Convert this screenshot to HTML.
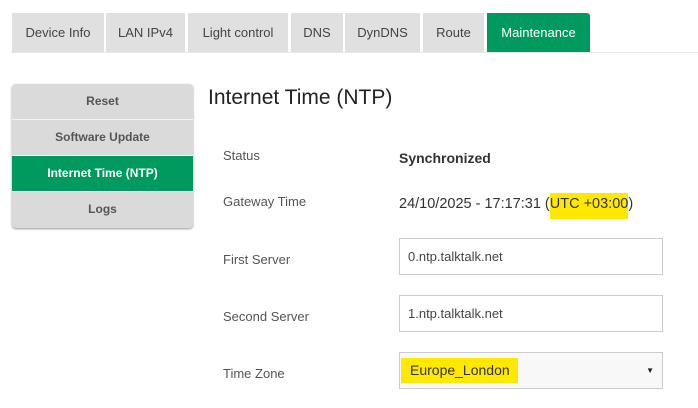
<!DOCTYPE html>
<html><head><style>
*{margin:0;padding:0;box-sizing:border-box}
body{width:698px;height:408px;background:#fff;font-family:"Liberation Sans",sans-serif;position:relative;overflow:hidden;color:#444}
.line{position:absolute;left:11px;right:0;top:52px;height:1px;background:#e8e8e8}
.tab{position:absolute;top:13px;height:39px;background:#e0e0e0;font-size:13px;line-height:39px;text-align:center;color:#444}
.tab.on{background:#009a5e;color:#fff;border-radius:0 3px 0 0}
.side{position:absolute;left:12px;top:84px;width:181px;height:144px;border-radius:4px;background:#dadada;box-shadow:0 1px 2px #999;overflow:hidden}
.si{height:36px;line-height:35px;text-align:center;font-size:12px;font-weight:bold;color:#555;border-bottom:1px solid #f3f3f3}
.si.on{background:#009a5e;color:#fff}
h1{position:absolute;left:208px;top:86px;font-weight:normal;font-size:21px;color:#222}
.lb{position:absolute;left:223px;font-size:13px;color:#555}
.v{position:absolute;left:399px;font-size:14.5px;color:#333}
.in{position:absolute;left:399px;width:264px;height:37px;border:1px solid #ccc;font-size:13px;color:#444;padding-left:8px;line-height:35px;background:#fff}
.hl{background:#ffe800}
</style></head><body>
<div class="tab" style="left:12px;width:92px">Device Info</div>
<div class="tab" style="left:106px;width:79px">LAN IPv4</div>
<div class="tab" style="left:188px;width:100px">Light control</div>
<div class="tab" style="left:291px;width:52px">DNS</div>
<div class="tab" style="left:345px;width:75px">DynDNS</div>
<div class="tab" style="left:423px;width:61px">Route</div>
<div class="tab on" style="left:487px;width:103px">Maintenance</div>
<div class="line"></div>
<div class="side">
<div class="si">Reset</div>
<div class="si">Software Update</div>
<div class="si on">Internet Time (NTP)</div>
<div class="si" style="border:0">Logs</div>
</div>
<h1>Internet Time (NTP)</h1>
<div class="lb" style="top:148px">Status</div>
<div class="v" style="top:150px;font-weight:bold;color:#333;font-size:14px">Synchronized</div>
<div class="lb" style="top:194px">Gateway Time</div>
<div class="v" style="top:196px">24/10/2025 - 17:17:31 (<span class="hl" style="padding:3px 0 7px">UTC +03:00</span>)</div>
<div class="lb" style="top:252px">First Server</div>
<div class="in" style="top:238px">0.ntp.talktalk.net</div>
<div class="lb" style="top:309px">Second Server</div>
<div class="lb" style="top:366px">Time Zone</div>
<div class="in" style="top:295px">1.ntp.talktalk.net</div>
<div class="in" style="top:352px;background:#f8f8f8;padding-left:1px"><span class="hl" style="display:inline-block;height:25px;line-height:25px;margin-top:5px;padding:0 8px 0 9px;font-size:14px;color:#333">Europe_London</span><span style="position:absolute;right:8px;top:0;font-size:8px;color:#222">&#9660;</span></div>
</body></html>
